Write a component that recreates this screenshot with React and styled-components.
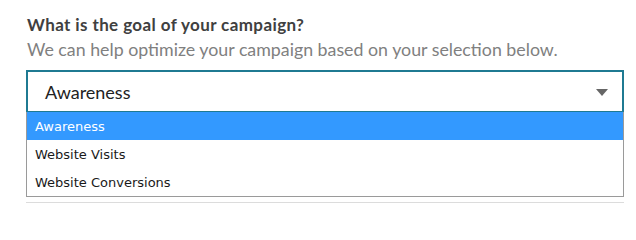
import React, { useState } from "react";
import styled, { createGlobalStyle } from "styled-components";

const Global = createGlobalStyle`
  html, body { margin: 0; padding: 0; background: #fff; }
  body { font-family: "Lato", "Open Sans", sans-serif; }
  * { box-sizing: border-box; }
`;

const Page = styled.div`
  padding: 14px 12px 0 26px;
  width: 636px;
`;

const Title = styled.h2`
  margin: 0 0 0 1px;
  font-size: 17px;
  letter-spacing: 0.4px;
  line-height: 22px;
  font-weight: 700;
  color: #404040;
`;

const Subtitle = styled.p`
  margin: 1px 0 0 1px;
  font-size: 17.8px;
  line-height: 24px;
  color: #808080;
`;

const Field = styled.div`
  margin-top: 9px;
  width: 598px;
  display: flex;
  flex-direction: column;
`;

const SelectBox = styled.div`
  height: 42px;
  border: 2px solid #1f7a92;
  border-bottom-width: 1px;
  display: flex;
  align-items: center;
  justify-content: space-between;
  padding: 1px 14px 0 17px;
  font-size: 18px;
  color: #222;
`;

const Arrow = styled.span`
  width: 0;
  height: 0;
  border-left: 6px solid transparent;
  border-right: 6px solid transparent;
  border-top: 7px solid #666;
`;

const List = styled.ul`
  list-style: none;
  margin: 0;
  padding: 0;
  border: 1px solid #9a9a9a;
  border-top: 0;
  font-family: "DejaVu Sans", Verdana, sans-serif;
  font-size: 13px;
`;

const Option = styled.li`
  height: 28px;
  display: flex;
  align-items: center;
  padding-left: 8px;
  background: ${(p) => (p.$active ? "#3399ff" : "#fff")};
  color: ${(p) => (p.$active ? "#fff" : "#1a1a1a")};
`;

const Rule = styled.div`
  margin-top: 5px;
  height: 1px;
  background: #dcdcdc;
`;

const options = ["Awareness", "Website Visits", "Website Conversions"];

export default function App() {
  const [sel] = useState(0);
  return (
    <>
      <Global />
      <Page>
        <Title>What is the goal of your campaign?</Title>
        <Subtitle>We can help optimize your campaign based on your selection below.</Subtitle>
        <Field>
          <SelectBox>
            <span>{options[sel]}</span>
            <Arrow />
          </SelectBox>
          <List>
            {options.map((o, i) => (
              <Option key={o} $active={i === sel}>{o}</Option>
            ))}
          </List>
          <Rule />
        </Field>
      </Page>
    </>
  );
}
